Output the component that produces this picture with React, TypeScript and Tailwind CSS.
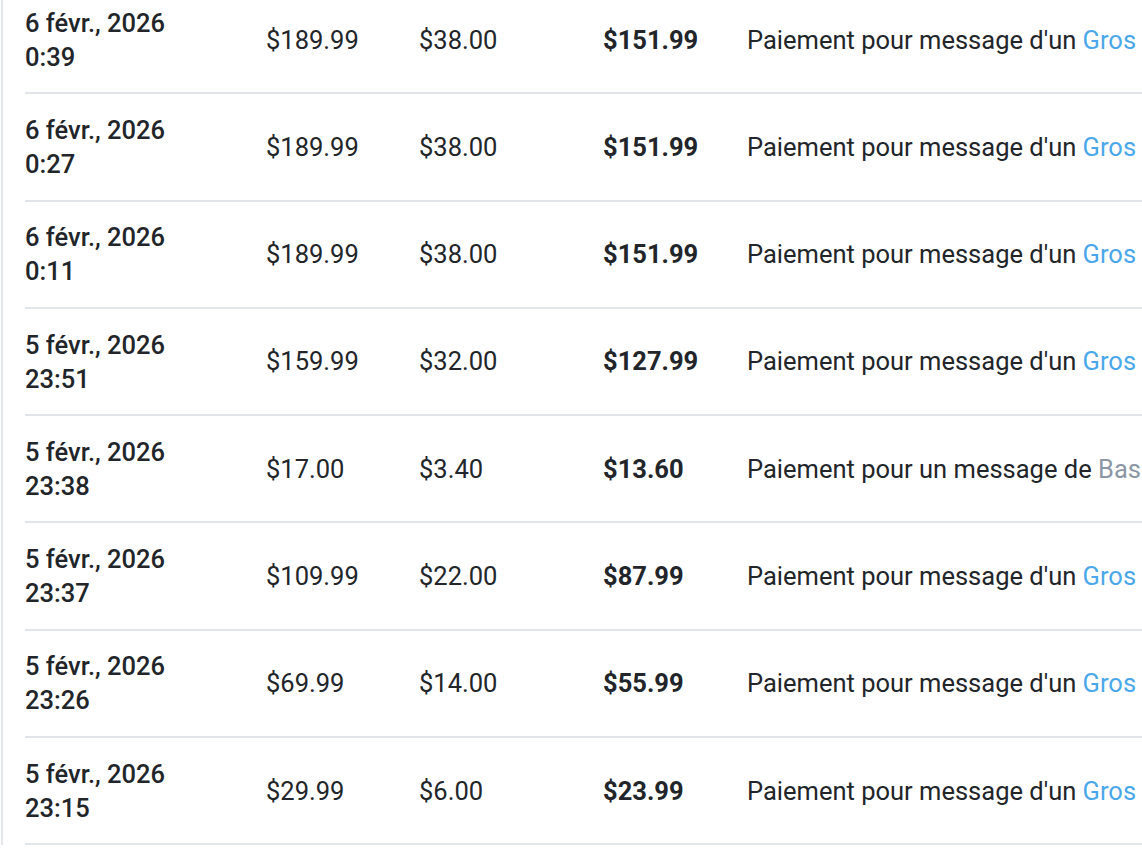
const rows = [
  { d: "6 févr., 2026", t: "0:39", a: "$189.99", f: "$38.00", n: "$151.99", k: "big" },
  { d: "6 févr., 2026", t: "0:27", a: "$189.99", f: "$38.00", n: "$151.99", k: "big" },
  { d: "6 févr., 2026", t: "0:11", a: "$189.99", f: "$38.00", n: "$151.99", k: "big" },
  { d: "5 févr., 2026", t: "23:51", a: "$159.99", f: "$32.00", n: "$127.99", k: "big" },
  { d: "5 févr., 2026", t: "23:38", a: "$17.00", f: "$3.40", n: "$13.60", k: "base" },
  { d: "5 févr., 2026", t: "23:37", a: "$109.99", f: "$22.00", n: "$87.99", k: "big" },
  { d: "5 févr., 2026", t: "23:26", a: "$69.99", f: "$14.00", n: "$55.99", k: "big" },
  { d: "5 févr., 2026", t: "23:15", a: "$29.99", f: "$6.00", n: "$23.99", k: "big" },
];

export default function App() {
  return (
    <div className="h-[860px] overflow-hidden bg-white font-['Roboto',sans-serif] text-[25.5px] text-[#222529]">
      <div className="ml-px -mt-[13px] border-l-2 border-[#e3e7ec] pl-[22px]">
        {rows.map((r, i) => (
          <div
            key={i}
            className="grid h-[107.3px] grid-cols-[241px_153px_184px_144px_1fr] items-center border-b-2 border-[#e1e5ea]"
          >
            <div className="font-medium leading-[34px]">
              <div>{r.d}</div>
              <div>{r.t}</div>
            </div>
            <div>{r.a}</div>
            <div>{r.f}</div>
            <div className="font-bold">{r.n}</div>
            <div className="overflow-hidden whitespace-nowrap">
              {r.k === "big" ? (
                <>
                  Paiement pour message d'un <span className="text-[#4aa8ea]">Gros</span>
                </>
              ) : (
                <>
                  Paiement pour un message de <span className="text-[#8c97a6]">Bas</span>
                </>
              )}
            </div>
          </div>
        ))}
      </div>
    </div>
  );
}
